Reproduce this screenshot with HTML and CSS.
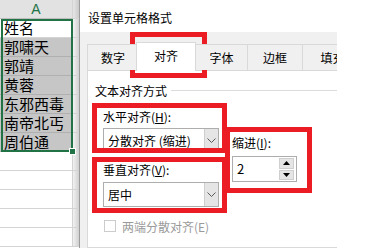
FILE: index.html
```html
<!DOCTYPE html>
<html lang="zh-CN">
<head>
    <meta charset="UTF-8">
    <title>设置单元格格式</title>
    <link rel="stylesheet" href="styles.css">
</head>
<body>
    <div class="screen">
        <div class="sheet">
            <div class="row head"><div class="cell a">A</div><div class="cell b"></div></div>
            <div class="row"><div class="cell a">姓名</div><div class="cell b"></div></div>
            <div class="row sel"><div class="cell a">郭啸天</div><div class="cell b"></div></div>
            <div class="row sel"><div class="cell a">郭靖</div><div class="cell b"></div></div>
            <div class="row sel"><div class="cell a">黄蓉</div><div class="cell b"></div></div>
            <div class="row sel"><div class="cell a">东邪西毒</div><div class="cell b"></div></div>
            <div class="row sel"><div class="cell a">南帝北丐</div><div class="cell b"></div></div>
            <div class="row sel"><div class="cell a">周伯通</div><div class="cell b"></div></div>
            <div class="row"><div class="cell a"></div><div class="cell b"></div></div>
            <div class="row"><div class="cell a"></div><div class="cell b"></div></div>
            <div class="row"><div class="cell a"></div><div class="cell b"></div></div>
            <div class="row"><div class="cell a"></div><div class="cell b"></div></div>
            <div class="row"><div class="cell a"></div><div class="cell b"></div></div>
        </div>

        <div class="dialog">
            <div class="title">设置单元格格式</div>
            <div class="tabs">
                <div class="tab">数字</div>
                <div class="tab active">对齐</div>
                <div class="tab">字体</div>
                <div class="tab">边框</div>
                <div class="tab">填充</div>
            </div>
            <div class="panel">
                <div class="group-title"><span>文本对齐方式</span><i class="rule"></i></div>
                <div class="group">
                    <div class="col-left">
                        <div class="label">水平对齐(<u>H</u>):</div>
                        <div class="select">
                            <span class="value">分散对齐 (缩进)</span>
                            <span class="arrow"><svg width="9" height="6" viewBox="0 0 9 6"><polyline points="0.5,0.5 4.5,4.5 8.5,0.5" fill="none" stroke="#5a5a5a" stroke-width="1"/></svg></span>
                        </div>
                        <div class="label second">垂直对齐(<u>V</u>):</div>
                        <div class="select lower">
                            <span class="value">居中</span>
                            <span class="arrow"><svg width="9" height="6" viewBox="0 0 9 6"><polyline points="0.5,0.5 4.5,4.5 8.5,0.5" fill="none" stroke="#5a5a5a" stroke-width="1"/></svg></span>
                        </div>
                        <div class="check"><span class="box"></span>两端分散对齐(E)</div>
                    </div>
                    <div class="col-right">
                        <div class="label">缩进(<u>I</u>):</div>
                        <div class="spin">
                            <span class="value">2</span>
                            <span class="spin-btns">
                                <span class="btn"><svg width="7" height="4" viewBox="0 0 7 4"><polygon points="3.5,0 7,4 0,4" fill="#000"/></svg></span>
                                <span class="btn"><svg width="7" height="4" viewBox="0 0 7 4"><polygon points="0,0 7,0 3.5,4" fill="#000"/></svg></span>
                            </span>
                        </div>
                    </div>
                </div>
            </div>
        </div>

        <!-- overlays -->
        <div class="selection"><span class="handle"></span></div>
        <div class="mark mark-tab"></div>
        <div class="mark mark-h"></div>
        <div class="mark mark-v"></div>
        <div class="mark mark-indent"></div>
    </div>
</body>
</html>
```

FILE: styles.css
```css
/* Excel "format cells" dialog over a sheet */

* {
    box-sizing: border-box;
}

body {
    margin: 0;
    background: #fff;
    font-family: "Noto Sans CJK SC", sans-serif;
    color: #000;
}

.screen {
    position: relative;
    display: flex;
    width: 369px;
    height: 248px;
    overflow: hidden;
}

/* sheet */

.sheet {
    width: 79px;
    flex: none;
}

.row {
    display: flex;
    height: 19px;
}

.cell {
    height: 19px;
    border-bottom: 1px solid #d4d4d4;
}

.cell.a {
    width: 73px;
    padding-left: 4px;
    border-right: 1px solid #d4d4d4;
    font-size: 15px;
    line-height: 18px;
    white-space: nowrap;
}

.cell.b {
    width: 6px;
    background: linear-gradient(to right, #f2f2f2, #d0d0d0);
}

.head .cell.a {
    padding-left: 0;
    background: #e2e2e2;
    border-bottom-color: #bdbdbd;
    color: #217346;
    text-align: center;
    font-family: "Liberation Sans", sans-serif;
    font-size: 14px;
    line-height: 19px;
}

.head .cell.b {
    background: linear-gradient(to right, #e6e6e6, #cacaca);
}

.sel .cell.a {
    background: #c6c6c6;
    border-bottom-color: #b0b0b0;
}

.selection {
    position: absolute;
    left: 1px;
    top: 19px;
    width: 72px;
    height: 133px;
    border: 2px solid #217346;
}

.handle {
    position: absolute;
    right: -5px;
    bottom: -5px;
    width: 7px;
    height: 7px;
    background: #217346;
    border: 1px solid #fff;
}

/* dialog */

.dialog {
    width: 258px;
    flex: none;
    display: flex;
    flex-direction: column;
    overflow: hidden;
    background: #f0f0f0;
    border-left: 1px solid #9c9c9c;
}

.title {
    height: 32px;
    padding: 10px 0 0 8px;
    background: #fff;
    font-size: 12px;
    line-height: 16px;
}

.tabs {
    position: relative;
    z-index: 1;
    height: 38px;
    display: grid;
    grid-template-columns: 51px 57px 52px 55px 60px;
    align-items: end;
    padding-left: 7px;
}

.tab {
    height: 26px;
    margin-right: -1px;
    border: 1px solid #d9d9d9;
    border-bottom: none;
    background: #f0f0f0;
    font-size: 12px;
    line-height: 25px;
    text-align: center;
    white-space: nowrap;
}

.tab.active {
    height: 29px;
    margin: 0 -1px -1px -2px;
    background: #fff;
    line-height: 26px;
}

.panel {
    flex: 1;
    margin-left: 7px;
    padding: 12px 0 0 7px;
    background: #fff;
    border: 1px solid #d9d9d9;
    border-right: none;
}

.group-title {
    display: flex;
    align-items: center;
    height: 16px;
    font-size: 12px;
    line-height: 16px;
}

.rule {
    flex: 1;
    height: 1px;
    margin: 0 0 1px 4px;
    background: #dcdcdc;
}

.group {
    display: flex;
    margin-top: 10px;
    padding-left: 8px;
}

.col-left {
    width: 116px;
}

.col-right {
    margin-left: 13px;
    padding-top: 26px;
}

.label {
    height: 16px;
    font-size: 12px;
    line-height: 16px;
    white-space: nowrap;
}

.label.second {
    margin-top: 9px;
}

.select {
    display: flex;
    height: 25px;
    margin-top: 3px;
    border: 1px solid #adadad;
    font-size: 12px;
}

.select.lower {
    margin-top: 4px;
}

.select .value {
    flex: 1;
    padding-left: 4px;
    line-height: 23px;
    white-space: nowrap;
}

.select .arrow {
    width: 14px;
    display: flex;
    align-items: center;
    justify-content: center;
    background: #e5e5e5;
    border-left: 1px solid #cfcfcf;
}

.check {
    display: flex;
    align-items: center;
    height: 16px;
    margin-top: 11px;
    padding-left: 1px;
    color: #9a9a9a;
    font-size: 12px;
    white-space: nowrap;
}

.check .box {
    width: 12px;
    height: 12px;
    margin-right: 6px;
    border: 1px solid #cccccc;
}

.spin {
    display: flex;
    width: 65px;
    height: 26px;
    margin-top: 5px;
    padding: 1px;
    border: 1px solid #adadad;
}

.spin .value {
    flex: 1;
    padding-left: 3px;
    font-size: 13px;
    line-height: 22px;
}

.spin-btns {
    display: flex;
    flex-direction: column;
    gap: 1px;
    width: 15px;
    margin-right: 1px;
}

.spin-btns .btn {
    flex: 1;
    display: flex;
    align-items: center;
    justify-content: center;
    background: #e5e5e5;
    border: 1px solid #cfcfcf;
}

/* red highlight frames */

.mark {
    position: absolute;
    border: 5px solid #ec1c24;
}

.mark-tab {
    left: 130px;
    top: 32px;
    width: 77px;
    height: 46px;
}

.mark-h {
    left: 92px;
    top: 103px;
    width: 135px;
    height: 50px;
}

.mark-v {
    left: 92px;
    top: 157px;
    width: 135px;
    height: 56px;
}

.mark-indent {
    left: 225px;
    top: 127px;
    width: 87px;
    height: 66px;
}
```
